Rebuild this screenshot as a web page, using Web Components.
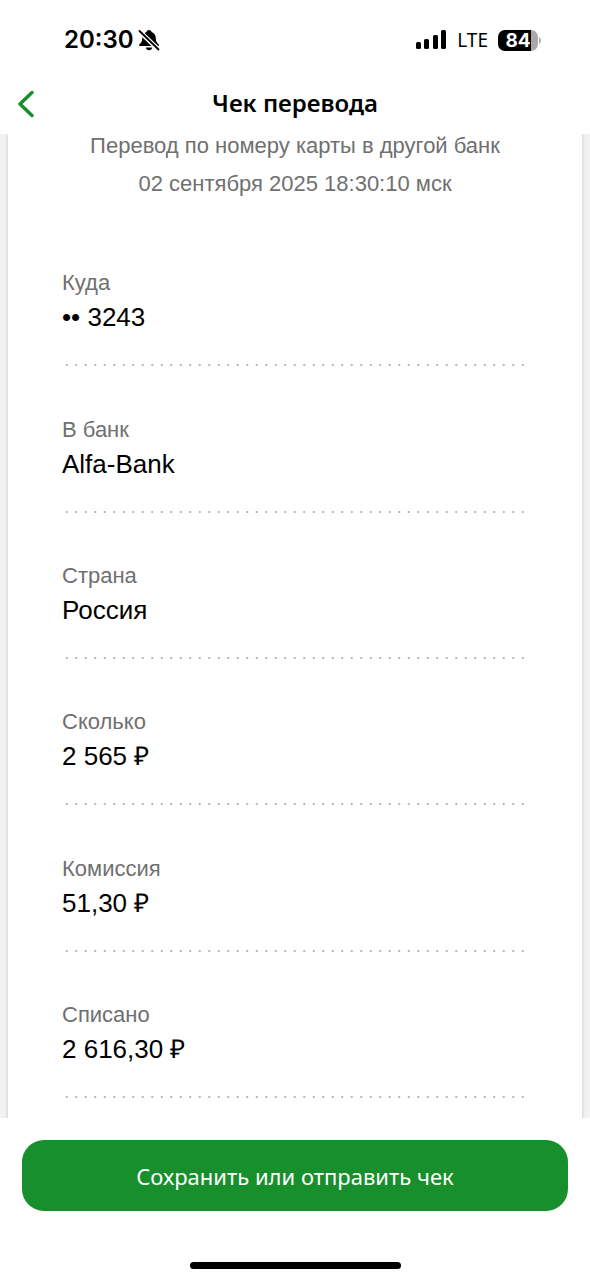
<!DOCTYPE html>
<html lang="ru">
<head>
<meta charset="utf-8">
<meta name="viewport" content="width=device-width, initial-scale=1">
<title>Чек перевода</title>
<style>
html, body { margin: 0; background: #fff; }
body { font-family: "Liberation Sans", Arial, sans-serif; color: #000; }
</style>
</head>
<body>
<receipt-screen></receipt-screen>
<script>
function define(name, html) {
  const t = document.createElement('template');
  t.innerHTML = html;
  customElements.define(name, class extends HTMLElement {
    constructor() {
      super();
      this.attachShadow({ mode: 'open' }).append(t.content.cloneNode(true));
    }
  });
}

define('status-bar', `
<style>
:host { display: flex; align-items: center; justify-content: space-between; height: 80px; padding: 0 49px 0 64px; font-family: Inter, sans-serif; }
.side { display: flex; align-items: center; }
.time { font-size: 24px; font-weight: 600; line-height: 30px; margin-right: 4px; }
.net { font-family: "Noto Sans", sans-serif; font-size: 19px; line-height: 24px; margin: 0 10px; }
.battery { display: flex; align-items: center; gap: 1px; }
.level { width: 40px; height: 21px; border-radius: 7px; background: linear-gradient(90deg, #000 33px, #a9a9a9 33px); color: #fff; font-size: 19px; font-weight: 700; line-height: 21px; text-align: center; }
svg { display: block; }
</style>
<div class="side">
  <span class="time">20:30</span>
  <svg width="22" height="22" viewBox="0 0 22 22" aria-hidden="true">
    <path d="M11 1C9.400 1 8.600 2 8.500 3C5.500 4 4.300 6.500 4.200 9.500C4.100 12.500 3.400 13.600 1.500 15.200C.800 16 1 17 2 17H20C21 17 21.200 16 20.500 15.200C18.600 13.600 17.900 12.500 17.800 9.500C17.700 6.500 16.500 4 13.500 3C13.400 2 12.600 1 11 1ZM7.800 18.500H14.200C13.800 22 8.200 22 7.800 18.500Z"/>
    <path d="M1 2L21 21" stroke="#fff" stroke-width="4.500"/>
    <path d="M1.500 2L20.500 20.500" stroke="#000" stroke-width="1.800" stroke-linecap="round"/>
  </svg>
</div>
<div class="side">
  <svg width="31" height="20" viewBox="0 0 31 20" aria-hidden="true">
    <rect x="0" y="12" width="5" height="7" rx="1.500"/><rect x="8" y="9" width="5" height="10" rx="1.500"/><rect x="17" y="5" width="5" height="14" rx="1.500"/><rect x="25" y="0" width="5" height="19" rx="1.500"/>
  </svg>
  <span class="net">LTE</span>
  <span class="battery"><span class="level">84</span>
    <svg width="2" height="7" viewBox="0 0 2 7" aria-hidden="true"><path d="M0 0Q2 1 2 3.500T0 7Z" fill="#a9a9a9"/></svg>
  </span>
</div>`);

define('nav-bar', `
<style>
:host { display: grid; grid-template-columns: 52px 1fr 52px; height: 54px; }
button { display: block; border: 0; background: none; padding: 0 0 0 18px; height: 48px; width: 52px; }
svg { display: block; }
h1 { margin: 0; text-align: center; font: 600 24px/46px "Noto Sans", sans-serif; }
</style>
<button type="button" aria-label="Назад">
  <svg width="16" height="28" viewBox="0 0 16 28" aria-hidden="true"><path d="M14 2.500L2 14L14 25.500" fill="none" stroke="#178f2c" stroke-width="3.400" stroke-linecap="round" stroke-linejoin="round"/></svg>
</button>
<h1><slot></slot></h1>`);

define('receipt-row', `
<style>
:host { display: flex; flex-direction: column; justify-content: flex-end; }
.label { color: #707070; font-size: 22px; line-height: 26px; }
.value { font-size: 26px; line-height: 30px; margin: 6px 0 32px; }
.dots { height: 2px; background: radial-gradient(circle, #b4b4b4 1px, transparent 1px) 0 0 / calc(100% / 49) 2px repeat-x; }
</style>
<div class="label"><slot name="label"></slot></div>
<div class="value"><slot></slot></div>
<div class="dots"></div>`);

define('receipt-card', `
<style>
:host { display: flex; flex: 1; padding: 0 8px; background: #f2f2f2; }
.paper { flex: 1; display: flex; flex-direction: column; background: #fff; box-shadow: 0 0 3px 1px #d4d4d4; clip-path: inset(0 -8px); padding: 0 54px 20px; }
.head { color: #707070; font-size: 22px; line-height: 38px; text-align: center; margin: -7px -20px 17px; }
.rows { flex: 1; display: grid; grid-auto-rows: 1fr; }
</style>
<div class="paper">
  <div class="head"><slot name="head"></slot></div>
  <div class="rows"><slot></slot></div>
</div>`);

define('receipt-footer', `
<style>
:host { display: flex; flex-direction: column; align-items: center; padding: 22px 22px 11px; }
button { width: 100%; height: 71px; border: 0; border-radius: 22px; background: #178f2c; color: #fff; font: 400 22px/32px "Noto Sans", sans-serif; }
.home { width: 211px; height: 7px; border-radius: 4px; background: #000; margin-top: 51px; }
</style>
<button type="button"><slot></slot></button>
<div class="home"></div>`);

define('receipt-screen', `
<style>
:host { display: flex; flex-direction: column; min-height: 100vh; background: #fff; }
</style>
<status-bar></status-bar>
<nav-bar>Чек перевода</nav-bar>
<receipt-card>
  <div slot="head">Перевод по номеру карты в другой банк</div>
  <div slot="head">02 сентября 2025 18:30:10 мск</div>
  <receipt-row><span slot="label">Куда</span>•• 3243</receipt-row>
  <receipt-row><span slot="label">В банк</span>Alfa-Bank</receipt-row>
  <receipt-row><span slot="label">Страна</span>Россия</receipt-row>
  <receipt-row><span slot="label">Сколько</span>2 565 ₽</receipt-row>
  <receipt-row><span slot="label">Комиссия</span>51,30 ₽</receipt-row>
  <receipt-row><span slot="label">Списано</span>2 616,30 ₽</receipt-row>
</receipt-card>
<receipt-footer>Сохранить или отправить чек</receipt-footer>`);
</script>
</body>
</html>
